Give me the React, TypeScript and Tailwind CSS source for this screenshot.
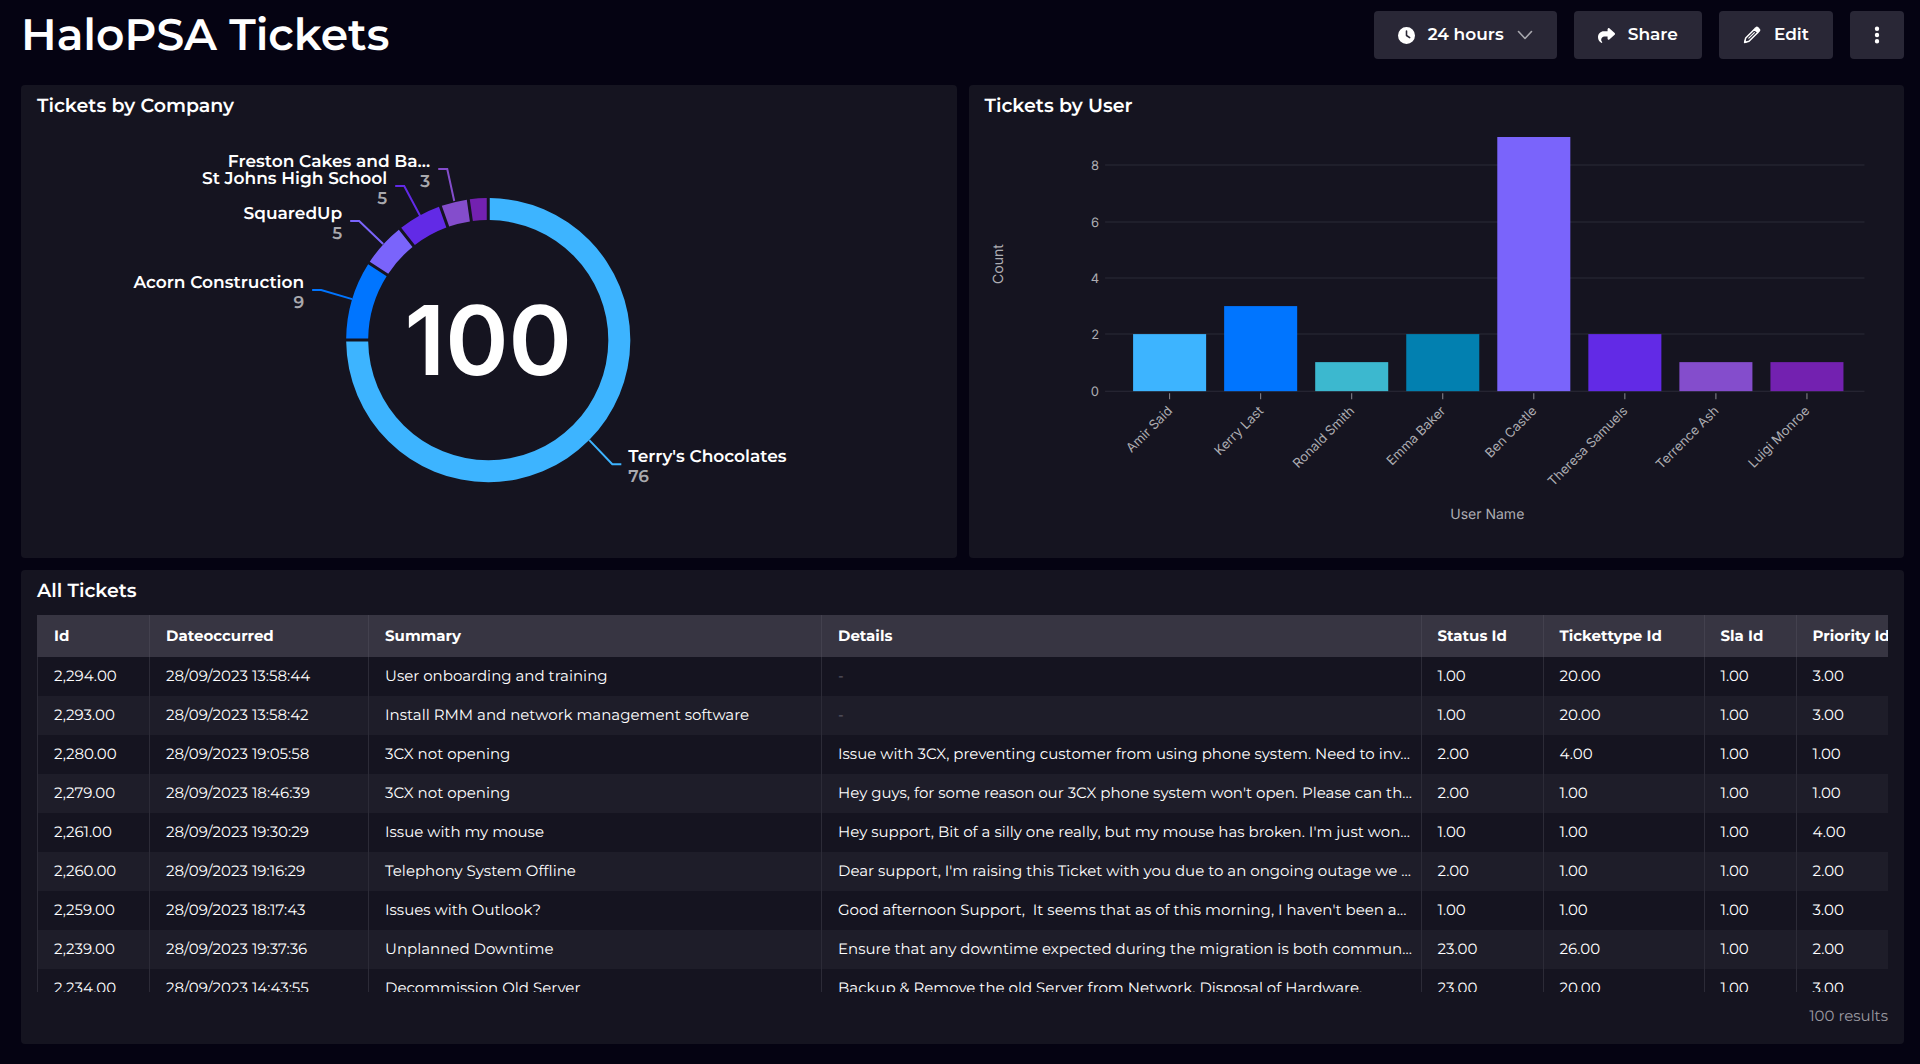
import type { ReactNode } from 'react';
import { FaClock, FaShare, FaEllipsisVertical } from 'react-icons/fa6';

type Slice = {
  value: number;
  color: string;
  label?: string;
  link?: [number, number][];
  anchor?: 'start' | 'end';
};

const slices: Slice[] = [
  { value: 76, color: '#3db4ff', label: "Terry's Chocolates", link: [[552, 310], [575, 334], [584, 334]], anchor: 'start' },
  { value: 9, color: '#0075ff', label: 'Acorn Construction', link: [[315, 169], [284, 160], [275, 160]], anchor: 'end' },
  { value: 5, color: '#7a64fb', label: 'SquaredUp', link: [[346, 114], [322, 91], [313, 91]], anchor: 'end' },
  { value: 5, color: '#622ae6', label: 'St Johns High School', link: [[383, 86], [367, 56], [358, 56]], anchor: 'end' },
  { value: 3, color: '#844dcc', label: 'Freston Cakes and Ba…', link: [[417, 71], [410, 39], [401, 39]], anchor: 'end' },
  { value: 2, color: '#7321b0' },
];

const users = [
  { name: 'Amir Said', count: 2, color: '#3db4ff' },
  { name: 'Kerry Last', count: 3, color: '#0075ff' },
  { name: 'Ronald Smith', count: 1, color: '#3cb8cf' },
  { name: 'Emma Baker', count: 2, color: '#0280b0' },
  { name: 'Ben Castle', count: 9, color: '#7a64fb' },
  { name: 'Theresa Samuels', count: 2, color: '#622ae6' },
  { name: 'Terrence Ash', count: 1, color: '#844dcc' },
  { name: 'Luigi Monroe', count: 1, color: '#7321b0' },
];

const columns = [
  { title: 'Id', width: 'w-[112px]' },
  { title: 'Dateoccurred', width: 'w-[219px]' },
  { title: 'Summary', width: 'w-[453px]' },
  { title: 'Details', width: 'w-auto' },
  { title: 'Status Id', width: 'w-[122px]' },
  { title: 'Tickettype Id', width: 'w-[161px]' },
  { title: 'Sla Id', width: 'w-[92px]' },
  { title: 'Priority Id', width: 'w-[92px]' },
];

const rows = [
  ['2,294.00', '28/09/2023 13:58:44', 'User onboarding and training', '-', '1.00', '20.00', '1.00', '3.00'],
  ['2,293.00', '28/09/2023 13:58:42', 'Install RMM and network management software', '-', '1.00', '20.00', '1.00', '3.00'],
  ['2,280.00', '28/09/2023 19:05:58', '3CX not opening', 'Issue with 3CX, preventing customer from using phone system. Need to inv…', '2.00', '4.00', '1.00', '1.00'],
  ['2,279.00', '28/09/2023 18:46:39', '3CX not opening', "Hey guys, for some reason our 3CX phone system won't open. Please can th…", '2.00', '1.00', '1.00', '1.00'],
  ['2,261.00', '28/09/2023 19:30:29', 'Issue with my mouse', "Hey support, Bit of a silly one really, but my mouse has broken. I'm just won…", '1.00', '1.00', '1.00', '4.00'],
  ['2,260.00', '28/09/2023 19:16:29', 'Telephony System Offline', "Dear support, I'm raising this Ticket with you due to an ongoing outage we …", '2.00', '1.00', '1.00', '2.00'],
  ['2,259.00', '28/09/2023 18:17:43', 'Issues with Outlook?', "Good afternoon Support,  It seems that as of this morning, I haven't been a…", '1.00', '1.00', '1.00', '3.00'],
  ['2,239.00', '28/09/2023 19:37:36', 'Unplanned Downtime', 'Ensure that any downtime expected during the migration is both commun…', '23.00', '26.00', '1.00', '2.00'],
  ['2,234.00', '28/09/2023 14:43:55', 'Decommission Old Server', 'Backup & Remove the old Server from Network. Disposal of Hardware.', '23.00', '20.00', '1.00', '3.00'],
];

// Ring segment whose ends stay parallel, leaving an even gap between neighbours.
function ringPath(start: number, end: number, cx: number, cy: number, outer: number, inner: number, gap: number) {
  const point = (deg: number, r: number, side: number) => {
    const a = ((deg - 90) * Math.PI) / 180 + side * Math.asin(gap / 2 / r);
    return `${cx + r * Math.cos(a)} ${cy + r * Math.sin(a)}`;
  };
  const large = end - start > 180 ? 1 : 0;
  return `M${point(start, outer, 1)}A${outer} ${outer} 0 ${large} 1 ${point(end, outer, -1)}L${point(end, inner, -1)}A${inner} ${inner} 0 ${large} 0 ${point(start, inner, 1)}Z`;
}

function DonutChart() {
  const pad = 1;
  const total = slices.reduce((sum, s) => sum + s.value, 0);
  const perUnit = (360 - slices.length * pad) / total;
  let angle = 0;
  return (
    <svg viewBox="0 0 903 412" className="block w-full" role="img" aria-label="Tickets by Company">
      {slices.map((s) => {
        const start = angle;
        angle += s.value * perUnit + pad;
        return <path key={s.color} d={ringPath(start, angle, 451, 210, 142, 120, 3)} fill={s.color} />;
      })}
      {slices.map((s) => {
        if (!s.link) return null;
        const [x, y] = s.link[2];
        const textX = s.anchor === 'start' ? x + 7 : x - 8;
        return (
          <g key={s.label}>
            <polyline points={s.link.map((p) => p.join(',')).join(' ')} fill="none" stroke={s.color} strokeWidth="2" />
            <text x={textX} y={y - 2} textAnchor={s.anchor} className="fill-white text-[17px] font-semibold">
              {s.label}
            </text>
            <text x={textX} y={y + 18} textAnchor={s.anchor} className="fill-[#a9a9ae] text-[17px] font-semibold">
              {s.value}
            </text>
          </g>
        );
      })}
      <text x="451" y="245" textAnchor="middle" className="fill-white font-[Inter,sans-serif] text-[96px] font-semibold">
        {total}
      </text>
    </svg>
  );
}

function BarChart() {
  const base = 261;
  const unit = 169 / 6;
  const step = 91;
  const barWidth = 73;
  return (
    <svg viewBox="0 0 903 412" className="block w-full font-[Inter,sans-serif]" role="img" aria-label="Tickets by User">
      {[0, 2, 4, 6, 8].map((v) => {
        const y = base - Math.ceil(v * unit);
        return (
          <g key={v}>
            <line x1="120" x2="879" y1={y} y2={y} stroke="#2b2a37" strokeWidth="1" />
            <text x="114" y={y + 5} textAnchor="end" className="fill-[#adadb2] text-[13px]">
              {v}
            </text>
          </g>
        );
      })}
      {users.map((u, i) => {
        const left = 148 + i * step;
        const center = left + barWidth / 2;
        const height = Math.ceil(u.count * unit);
        return (
          <g key={u.name}>
            <rect x={left} y={base - height} width={barWidth} height={height} fill={u.color} />
            <line x1={center} x2={center} y1={base + 2} y2={base + 8} stroke="#8b8a92" strokeWidth="1" />
            <text
              x={center}
              y={base + 22}
              textAnchor="end"
              transform={`rotate(-45 ${center} ${base + 17})`}
              className="fill-[#adadb2] text-[13px]"
            >
              {u.name}
            </text>
          </g>
        );
      })}
      <text x="18" y="134" textAnchor="middle" transform="rotate(-90 18 134)" className="fill-[#adadb2] text-[14px]">
        Count
      </text>
      <text x="502" y="389" textAnchor="middle" className="fill-[#adadb2] text-[14px]">
        User Name
      </text>
    </svg>
  );
}

function PencilIcon() {
  return (
    <svg viewBox="0 0 18 18" className="size-[18px]" aria-hidden="true">
      <path d="M11.5 3.2 14.8 6.5 6 15.3 1.6 16.4 2.7 12Z" fill="none" stroke="currentColor" strokeWidth="1.5" strokeLinejoin="round" />
      <path d="M5.8 12.2 11.4 6.6" fill="none" stroke="currentColor" strokeWidth="1.1" strokeLinecap="round" />
      <path d="M1 17 1.8 13.8 4.2 16.2Z" fill="currentColor" />
      <path d="m10.6 3.2 1.9-1.9a2 2 0 0 1 2.8 0l1.4 1.4a2 2 0 0 1 0 2.8l-1.9 1.9Z" fill="currentColor" />
    </svg>
  );
}

function ChevronIcon() {
  return (
    <svg viewBox="0 0 16 10" className="h-2.5 w-4" aria-hidden="true">
      <path d="m1.5 1.5 6.5 7 6.5-7" fill="none" stroke="#a9a8af" strokeWidth="1.6" strokeLinecap="round" strokeLinejoin="round" />
    </svg>
  );
}

function Panel({ title, children }: { title: string; children: ReactNode }) {
  return (
    <section className="min-w-0 rounded bg-[#151420] px-4 pb-4">
      <h2 className="pt-[9px] text-[19px] leading-6 font-semibold">{title}</h2>
      {children}
    </section>
  );
}

function ToolbarButton({ label, children }: { label?: string; children: ReactNode }) {
  return (
    <button
      type="button"
      aria-label={label}
      className={`flex h-12 items-center justify-center gap-[13px] rounded bg-[#292736] text-[17px] font-semibold text-white ${label ? 'w-[54px]' : 'px-6'}`}
    >
      {children}
    </button>
  );
}

function TicketTable() {
  return (
    <div className="h-[377px] overflow-hidden">
      <table className="w-full table-fixed border-collapse text-left text-[15px] whitespace-pre">
        <thead>
          <tr className="h-[42px] bg-[#373542]">
            {columns.map((c) => (
              <th key={c.title} scope="col" className={`${c.width} border-l border-[#43414e] pr-0 pl-4 font-bold first:border-[#373542]`}>
                {c.title}
              </th>
            ))}
          </tr>
        </thead>
        <tbody>
          {rows.map((row) => (
            <tr key={row[0]} className="h-[39px] even:bg-[#1e1d29]">
              {row.map((cell, i) => (
                <td key={i} className={`border-l border-[#2c2b37] pr-0 pl-4 ${cell === '-' ? 'text-[#6b6974]' : 'text-white'}`}>
                  {cell}
                </td>
              ))}
            </tr>
          ))}
        </tbody>
      </table>
    </div>
  );
}

export default function App() {
  return (
    <div className="min-h-screen bg-[#050312] pr-4 pb-5 pl-[21px] font-[Montserrat,Inter,sans-serif] text-white [text-rendering:geometricPrecision]">
      <header className="flex h-[85px] items-start justify-between pt-[11px]">
        <h1 className="text-[44px] leading-[48px] font-semibold">HaloPSA Tickets</h1>
        <div className="flex gap-[17px]">
          <ToolbarButton>
            <FaClock className="size-[17px]" />
            24 hours
            <ChevronIcon />
          </ToolbarButton>
          <ToolbarButton>
            <FaShare className="size-[17px]" />
            Share
          </ToolbarButton>
          <ToolbarButton>
            <PencilIcon />
            Edit
          </ToolbarButton>
          <ToolbarButton label="More options">
            <FaEllipsisVertical className="size-5" />
          </ToolbarButton>
        </div>
      </header>
      <main className="grid grid-cols-2 gap-3">
        <Panel title="Tickets by Company">
          <div className="pt-3">
            <DonutChart />
          </div>
        </Panel>
        <Panel title="Tickets by User">
          <div className="pt-3">
            <BarChart />
          </div>
        </Panel>
        <div className="col-span-2 grid">
          <Panel title="All Tickets">
            <div className="pt-3">
              <TicketTable />
            </div>
            <p className="pt-3 text-right text-[15px] leading-6 text-[#9b9aa1]">100 results</p>
          </Panel>
        </div>
      </main>
    </div>
  );
}
